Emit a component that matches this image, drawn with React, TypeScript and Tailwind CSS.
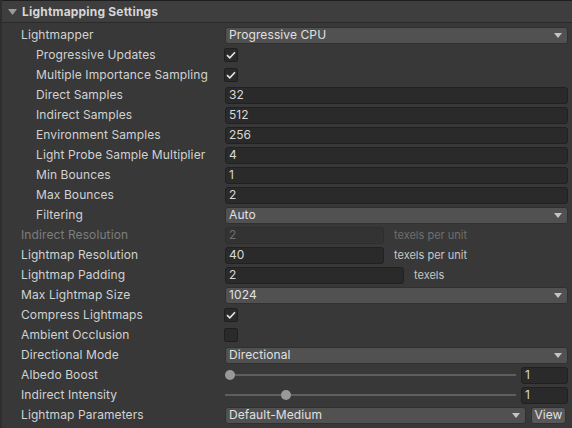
import React from 'react';

const FONT = { fontFamily: 'Inter, "Noto Sans", sans-serif' };

function Caret() {
    return (
        <svg width="8" height="5" viewBox="0 0 8 5" className="shrink-0">
            <path d="M0 0 L8 0 L4 5 Z" fill="#c4c4c4" />
        </svg>
    );
}

function Row({ label, indent = false, disabled = false, children }: { label: string; indent?: boolean; disabled?: boolean; children: React.ReactNode }) {
    return (
        <div className="flex h-5 items-center">
            <div
                className={`w-[223px] shrink-0 truncate text-[12px] tracking-[0.1px] ${indent ? 'pl-[34px]' : 'pl-[19px]'} ${disabled ? 'text-[#7d7d7d]' : 'text-[#d2d2d2]'}`}
            >
                {label}
            </div>
            <div className="flex min-w-0 flex-1 items-center pr-[4px]">{children}</div>
        </div>
    );
}

function Dropdown({ value, className = 'flex-1' }: { value: string; className?: string }) {
    return (
        <div className={`flex h-[17px] items-center justify-between rounded-[3px] border border-[#303030] bg-[#515151] pl-[3px] pr-[5px] text-[12px] tracking-[0.1px] text-[#e0e0e0] ${className}`}>
            <span>{value}</span>
            <Caret />
        </div>
    );
}

function Field({ value, disabled = false, className = 'flex-1' }: { value: string; disabled?: boolean; className?: string }) {
    return (
        <div
            className={`flex h-[17px] items-center rounded-[3px] border pl-[3px] text-[12px] ${disabled ? 'border-[#2e2e2e] bg-[#333333] text-[#6f6f6f]' : 'border-[#212121] bg-[#2a2a2a] text-[#d8d8d8]'} ${className}`}
        >
            {value}
        </div>
    );
}

function Check({ checked }: { checked: boolean }) {
    return (
        <div className="ml-[-1px] flex h-[14px] w-[14px] items-center justify-center rounded-[2px] border border-[#1f1f1f] bg-[#2a2a2a]">
            {checked && (
                <svg width="10" height="8" viewBox="0 0 10 8">
                    <path d="M1 4.2 L3.8 6.8 L9 1.2" stroke="#e6e6e6" strokeWidth="1.6" fill="none" />
                </svg>
            )}
        </div>
    );
}

function Slider({ pos, value }: { pos: number; value: string }) {
    return (
        <>
            <div className="relative mr-[5px] h-[14px] flex-1">
                <div className="absolute left-0 right-0 top-[6px] h-[2px] bg-[#5e5e5e]" />
                <div
                    className="absolute top-[2px] h-[10px] w-[10px] rounded-full bg-[#999999]"
                    style={{ left: `${pos}px` }}
                />
            </div>
            <Field value={value} className="w-[47px]" />
        </>
    );
}

export default function App() {
    return (
        <div className="h-[428px] w-[572px] overflow-hidden border-l-2 border-[#2e2e2e] bg-[#383838] select-none" style={FONT}>
            {/* Header */}
            <div className="flex h-[23px] items-center border-b border-t border-b-[#2a2a2a] border-t-[#1e1e1e] bg-[#3e3e3e] pl-[6px]">
                <svg width="9" height="6" viewBox="0 0 9 6" className="mr-[5px] mt-[1px]">
                    <path d="M0 0 L9 0 L4.5 6 Z" fill="#9a9a9a" />
                </svg>
                <span className="text-[12px] font-bold tracking-[0.2px] text-[#d6d6d6]">Lightmapping Settings</span>
            </div>

            <div className="pt-[2px]">
                <Row label="Lightmapper">
                    <Dropdown value="Progressive CPU" />
                </Row>
                <Row label="Progressive Updates" indent>
                    <Check checked />
                </Row>
                <Row label="Multiple Importance Sampling" indent>
                    <Check checked />
                </Row>
                <Row label="Direct Samples" indent>
                    <Field value="32" />
                </Row>
                <Row label="Indirect Samples" indent>
                    <Field value="512" />
                </Row>
                <Row label="Environment Samples" indent>
                    <Field value="256" />
                </Row>
                <Row label="Light Probe Sample Multiplier" indent>
                    <Field value="4" />
                </Row>
                <Row label="Min Bounces" indent>
                    <Field value="1" />
                </Row>
                <Row label="Max Bounces" indent>
                    <Field value="2" />
                </Row>
                <Row label="Filtering" indent>
                    <Dropdown value="Auto" />
                </Row>
                <Row label="Indirect Resolution" disabled>
                    <Field value="2" disabled className="w-[159px]" />
                    <span className="ml-[10px] text-[11px] text-[#6f6f6f]">texels per unit</span>
                </Row>
                <Row label="Lightmap Resolution">
                    <Field value="40" className="w-[159px]" />
                    <span className="ml-[10px] text-[11px] text-[#c8c8c8]">texels per unit</span>
                </Row>
                <Row label="Lightmap Padding">
                    <Field value="2" className="w-[179px]" />
                    <span className="ml-[10px] text-[11px] text-[#c8c8c8]">texels</span>
                </Row>
                <Row label="Max Lightmap Size">
                    <Dropdown value="1024" />
                </Row>
                <Row label="Compress Lightmaps">
                    <Check checked />
                </Row>
                <Row label="Ambient Occlusion">
                    <Check checked={false} />
                </Row>
                <Row label="Directional Mode">
                    <Dropdown value="Directional" />
                </Row>
                <Row label="Albedo Boost">
                    <Slider pos={0} value="1" />
                </Row>
                <Row label="Indirect Intensity">
                    <Slider pos={56} value="1" />
                </Row>
                <Row label="Lightmap Parameters">
                    <Dropdown value="Default-Medium" />
                    <div className="ml-[5px] mr-[2px] flex h-[17px] w-[35px] items-center justify-center rounded-[3px] border border-[#303030] bg-[#585858] text-[12px] text-[#e0e0e0]">
                        View
                    </div>
                </Row>
            </div>
        </div>
    );
}
